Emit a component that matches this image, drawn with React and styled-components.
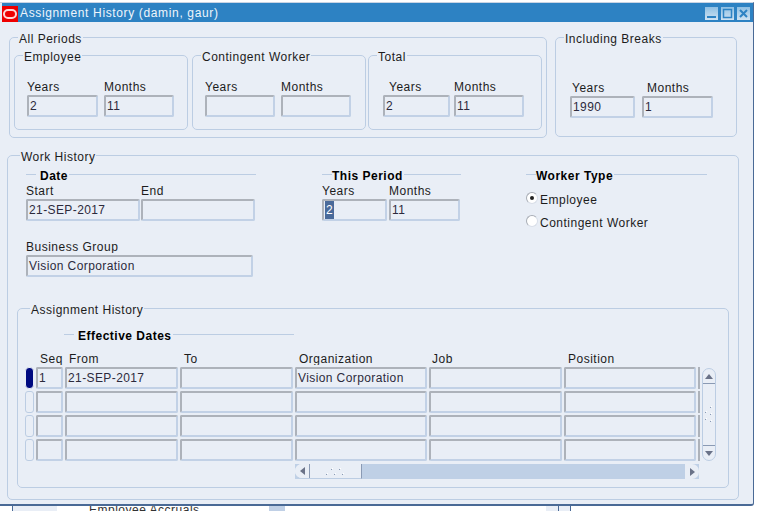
import React from 'react';
import styled, { createGlobalStyle } from 'styled-components';

const GlobalStyle = createGlobalStyle`
    html, body {
        margin: 0;
        padding: 0;
        background: #ffffff;
    }
    body {
        font-family: "Liberation Sans", Arial, sans-serif;
        font-size: 12px;
        color: #1c1c1c;
    }
`;

const Page = styled.div`
    width: 757px;
    height: 511px;
    overflow: hidden;
    padding-top: 2px;
    box-sizing: border-box;
`;

const Window = styled.div`
    width: 754px;
    height: 504px;
    box-sizing: border-box;
    background: #e9eef6;
    border-top: 1px solid #c9d4e4;
    border-right: 1px solid #4a6a96;
    border-bottom: 2px solid #4a6a96;
    border-bottom-right-radius: 3px;
`;

const TitleBar = styled.div`
    height: 19px;
    margin: 0 0 0 2px;
    background: #2d82c3;
    display: flex;
    align-items: center;
    color: #eef5fb;
    font-size: 12px;
    letter-spacing: 0.64px;
`;

const OracleLogo = styled.div`
    width: 16px;
    height: 16px;
    margin: 2px 2px 0 0;
    background: #ee0000;
    display: flex;
    align-items: center;
    justify-content: center;
    flex: none;
`;

const TitleText = styled.span`
    flex: 1;
`;

const WinButton = styled.div`
    width: 13px;
    height: 13px;
    margin-right: 3px;
    margin-top: 1px;
    background: linear-gradient(#8fc0e4, #cfe2f2);
    display: flex;
    align-items: center;
    justify-content: center;
    flex: none;
`;

const Body = styled.div`
    padding: 8px 0 0 7px;
`;

const TopRow = styled.div`
    display: flex;
    gap: 8px;
    margin-left: 2px;
`;

const Group = styled.fieldset`
    margin: ${(p) => p.$margin || 0};
    padding: ${(p) => p.$padding || 0};
    width: ${(p) => p.$width}px;
    height: ${(p) => p.$height}px;
    box-sizing: border-box;
    border: 1px solid #bccde3;
    border-radius: 5px;
    min-width: 0;
    flex: none;
`;

const GroupTitle = styled.legend`
    margin-left: ${(p) => p.$offset || 8}px;
    padding: 0 1px;
    height: 14px;
    font-size: 12px;
    line-height: 18px;
    letter-spacing: 0.5px;
`;

const GroupRow = styled.div`
    display: flex;
    gap: 4px;
    padding-left: 4px;
`;

const FieldRow = styled.div`
    display: flex;
    gap: ${(p) => p.$gap || 6}px;
    padding-left: ${(p) => p.$indent || 0}px;
`;

const FieldBox = styled.div`
    display: flex;
    flex-direction: column;
    gap: 2px;
`;

const Label = styled.label`
    display: block;
    height: 14px;
    line-height: 16px;
    padding-left: ${(p) => p.$indent || 0}px;
    letter-spacing: 0.5px;
    white-space: nowrap;
    overflow: hidden;
`;

const Input = styled.div`
    width: ${(p) => p.$width}px;
    height: 22px;
    box-sizing: border-box;
    border: 2px solid #c2d1e6;
    border-top-color: #adb2ba;
    border-left-color: #adb2ba;
    border-radius: 2px;
    padding-left: 1px;
    line-height: 18px;
    font-size: 12px;
    letter-spacing: 0.4px;
    color: #2c2a3c;
    white-space: nowrap;
    overflow: hidden;
`;

const Selected = styled.span`
    display: inline-block;
    background: #4a6a9a;
    color: #ffffff;
    padding: 0 1px;
`;

const FormGrid = styled.div`
    display: grid;
    grid-template-columns: 296px 204px 181px;
    padding: 7px 0 0 18px;
`;

const Column = styled.div`
    display: flex;
    flex-direction: column;
`;

const Section = styled.div`
    display: flex;
    align-items: center;
    width: ${(p) => p.$width}px;
    height: 14px;
    font-weight: bold;
    letter-spacing: 0.5px;
    color: #000000;

    &::before {
        content: "";
        width: 10px;
        height: 1px;
        margin-top: -4px;
        background: #bccde3;
    }

    &::after {
        content: "";
        flex: 1;
        height: 1px;
        margin-top: -4px;
        background: #bccde3;
    }
`;

const SectionText = styled.span`
    padding: 0 1px 0 ${(p) => p.$left ?? 4}px;
`;

const BusinessGroup = styled(FieldBox)`
    margin-top: 18px;
`;

const RadioList = styled.div`
    margin-top: 5px;
`;

const RadioRow = styled.div`
    display: flex;
    align-items: center;
    height: 23px;
    letter-spacing: 0.5px;
`;

const Radio = styled.span`
    width: 10px;
    height: 10px;
    margin: -4px 2px 0 0;
    border-radius: 50%;
    background: #ffffff;
    border: 1px solid #a8adb5;
    border-bottom-color: #d8dee8;
    border-right-color: #d8dee8;
    display: flex;
    align-items: center;
    justify-content: center;

    &::after {
        content: "";
        width: 4px;
        height: 4px;
        border-radius: 50%;
        background: ${(p) => (p.$on ? '#222222' : 'transparent')};
    }
`;

const Effective = styled.div`
    margin: 0 0 8px 46px;
`;

const TableArea = styled.div`
    display: flex;
    align-items: flex-end;
    padding-left: 7px;
`;

const TableGrid = styled.div`
    display: grid;
    grid-template-columns: 9px 27px 113px 113px 132px 133px 132px 2px;
    gap: 2px;
`;

const Indicator = styled.div`
    height: 22px;
    box-sizing: border-box;
    border: 1px solid ${(p) => (p.$current ? '#e9eef6' : '#bccde3')};
    border-radius: ${(p) => (p.$current ? 4 : 3)}px;
    background: ${(p) => (p.$current ? '#000a80' : 'transparent')};
`;

const HeadCell = styled(Label)`
    padding-left: ${(p) => p.$indent || 4}px;
`;

const Cell = styled(Input)`
    width: auto;
`;

const ClipCell = styled.div`
    height: 22px;
    box-sizing: border-box;
    border-left: 2px solid #adb2ba;
`;

const VScroll = styled.div`
    width: 14px;
    height: 93px;
    margin-left: 2px;
    box-sizing: border-box;
    border: 1px solid #bccde3;
    border-radius: 7px;
    display: flex;
    flex-direction: column;
    align-items: center;
    justify-content: space-between;
    flex: none;
`;

const VArrow = styled.div`
    width: 100%;
    height: 14px;
    display: flex;
    align-items: center;
    justify-content: center;
    border-${(p) => (p.$up ? 'bottom' : 'top')}: 1px solid #8a9ab4;
`;

const HScroll = styled.div`
    width: 404px;
    height: 15px;
    margin: 3px 0 0 277px;
    background: #bfd0e6;
    display: flex;
    justify-content: space-between;
`;

const HThumb = styled.div`
    width: 67px;
    box-sizing: border-box;
    display: flex;
    align-items: center;
    background: #e9eef6;
    border-right: 1px solid #8a9ab4;
    border-bottom: 1px solid #bccde3;
    border-radius: 7px 0 0 7px;
`;

const HArrow = styled.div`
    width: 14px;
    height: 100%;
    flex: none;
    display: flex;
    align-items: center;
    justify-content: center;
    background: #e9eef6;
    border-right: ${(p) => (p.$left ? '1px solid #8a9ab4' : '0')};
    border-radius: ${(p) => (p.$left ? '7px 0 0 7px' : '0 7px 7px 0')};
`;

const GripWrap = styled.div`
    flex: 1;
    display: flex;
    justify-content: center;
`;

const BackStrip = styled.div`
    display: flex;
    height: 5px;
`;

const BackPiece = styled.div`
    width: ${(p) => p.$width}px;
    box-sizing: border-box;
    flex: none;
    background: ${(p) => p.$bg || '#ffffff'};
    border-left: ${(p) => (p.$line ? '1px solid #4a6a96' : '0')};
    font-size: 12px;
    letter-spacing: 0.5px;
    line-height: 14px;
    padding-left: ${(p) => p.$indent || 0}px;
    overflow: hidden;
    white-space: nowrap;
    color: #333333;
`;

const BackText = styled.span`
    display: block;
    margin-top: -3px;
`;

const Triangle = ({ dir }) => {
    const points = {
        up: '1,6 9,6 5,1',
        down: '1,1 9,1 5,6',
        left: '6,1 6,9 1,5',
        right: '1,1 1,9 6,5',
    };
    const vertical = dir === 'up' || dir === 'down';
    return (
        <svg width={vertical ? 10 : 7} height={vertical ? 7 : 10}>
            <polygon points={points[dir]} fill="#6a7288" />
        </svg>
    );
};

const Grip = ({ vertical }) => (
    <svg width={vertical ? 10 : 20} height={vertical ? 20 : 10}>
        {(vertical
            ? [[7, 1], [2, 6], [7, 8], [2, 13], [7, 15]]
            : [[1, 7], [6, 2], [9, 7], [14, 2], [17, 7]]
        ).map(([x, y]) => (
            <g key={`${x}-${y}`}>
                <rect x={x} y={y} width="1" height="1" fill="#ffffff" />
                <rect x={x - 1} y={y + 1} width="1" height="1" fill="#8a9ab4" />
            </g>
        ))}
    </svg>
);

const Field = ({ label, width, value, indent }) => (
    <FieldBox>
        <Label $indent={indent}>{label}</Label>
        <Input $width={width}>{value}</Input>
    </FieldBox>
);

const emptyRows = [1, 2, 3];
const columns = ['Seq', 'From', 'To', 'Organization', 'Job', 'Position'];

const App = () => {
    return (
        <Page>
            <GlobalStyle />
            <Window>
                <TitleBar>
                    <OracleLogo>
                        <svg width="14" height="10" viewBox="0 0 14 10">
                            <rect x="1" y="1" width="12" height="8" rx="4" fill="none" stroke="#ffd8d8" strokeWidth="2" />
                        </svg>
                    </OracleLogo>
                    <TitleText>Assignment History (damin, gaur)</TitleText>
                    <WinButton>
                        <svg width="11" height="11"><rect x="1" y="8" width="9" height="2" fill="#2d82c3" /></svg>
                    </WinButton>
                    <WinButton>
                        <svg width="11" height="11"><rect x="1.5" y="1.5" width="8" height="8" fill="none" stroke="#2d82c3" strokeWidth="1.5" /></svg>
                    </WinButton>
                    <WinButton>
                        <svg width="11" height="11"><path d="M2 2 L9 9 M9 2 L2 9" stroke="#2d82c3" strokeWidth="2" /></svg>
                    </WinButton>
                </TitleBar>
                <Body>
                    <TopRow>
                        <Group $width={538} $height={108} $padding="4px 0 0 0">
                            <GroupTitle>All Periods</GroupTitle>
                            <GroupRow>
                                <Group $width={174} $height={82} $padding="17px 0 0 0">
                                    <GroupTitle>Employee</GroupTitle>
                                    <FieldRow $indent={12}>
                                        <Field label="Years" width={71} value="2" />
                                        <Field label="Months" width={70} value="11" />
                                    </FieldRow>
                                </Group>
                                <Group $width={174} $height={82} $padding="17px 0 0 0">
                                    <GroupTitle>Contingent Worker</GroupTitle>
                                    <FieldRow $indent={12}>
                                        <Field label="Years" width={70} />
                                        <Field label="Months" width={70} />
                                    </FieldRow>
                                </Group>
                                <Group $width={174} $height={82} $padding="17px 0 0 0" $margin="0 0 0 -2px">
                                    <GroupTitle>Total</GroupTitle>
                                    <FieldRow $indent={14} $gap={4}>
                                        <Field label="Years" width={67} value="2" indent={6} />
                                        <Field label="Months" width={70} value="11" />
                                    </FieldRow>
                                </Group>
                            </GroupRow>
                        </Group>
                        <Group $width={182} $height={107} $padding="36px 0 0 0">
                            <GroupTitle>Including Breaks</GroupTitle>
                            <FieldRow $indent={14} $gap={7}>
                                <Field label="Years" width={65} value="1990" indent={2} />
                                <Field label="Months" width={71} value="1" indent={5} />
                            </FieldRow>
                        </Group>
                    </TopRow>
                    <Group $width={732} $height={352} $margin="10px 0 0 0">
                        <GroupTitle $offset={12}>Work History</GroupTitle>
                        <FormGrid>
                            <Column>
                                <Section $width={230}>
                                    <SectionText>Date</SectionText>
                                </Section>
                                <FieldRow $gap={1}>
                                    <Field label="Start" width={114} value="21-SEP-2017" />
                                    <Field label="End" width={114} />
                                </FieldRow>
                                <BusinessGroup>
                                    <Label>Business Group</Label>
                                    <Input $width={227}>Vision Corporation</Input>
                                </BusinessGroup>
                            </Column>
                            <Column>
                                <Section $width={139}>
                                    <SectionText $left={0}>This Period</SectionText>
                                </Section>
                                <FieldRow $gap={2}>
                                    <Field label="Years" width={65} value={<Selected>2</Selected>} />
                                    <Field label="Months" width={71} value="11" />
                                </FieldRow>
                            </Column>
                            <Column>
                                <Section $width={181}>
                                    <SectionText $left={0}>Worker Type</SectionText>
                                </Section>
                                <RadioList>
                                    <RadioRow>
                                        <Radio $on />
                                        Employee
                                    </RadioRow>
                                    <RadioRow>
                                        <Radio />
                                        Contingent Worker
                                    </RadioRow>
                                </RadioList>
                            </Column>
                        </FormGrid>
                        <Group $width={712} $height={187} $margin="24px 0 0 9px" $padding="14px 0 0 0">
                            <GroupTitle $offset={12}>Assignment History</GroupTitle>
                            <Effective>
                                <Section $width={230}>
                                    <SectionText>Effective Dates</SectionText>
                                </Section>
                            </Effective>
                            <TableArea>
                                <TableGrid>
                                    <div />
                                    {columns.map((name) => (
                                        <HeadCell key={name} $indent={name === 'Job' ? 3 : 4}>{name}</HeadCell>
                                    ))}
                                    <div />
                                    <Indicator $current />
                                    <Cell>1</Cell>
                                    <Cell>21-SEP-2017</Cell>
                                    <Cell />
                                    <Cell>Vision Corporation</Cell>
                                    <Cell />
                                    <Cell />
                                    <ClipCell />
                                    {emptyRows.map((row) => (
                                        <React.Fragment key={row}>
                                            <Indicator />
                                            <Cell />
                                            <Cell />
                                            <Cell />
                                            <Cell />
                                            <Cell />
                                            <Cell />
                                            <ClipCell />
                                        </React.Fragment>
                                    ))}
                                </TableGrid>
                                <VScroll>
                                    <VArrow $up><Triangle dir="up" /></VArrow>
                                    <Grip vertical />
                                    <VArrow><Triangle dir="down" /></VArrow>
                                </VScroll>
                            </TableArea>
                            <HScroll>
                                <HThumb>
                                    <HArrow $left><Triangle dir="left" /></HArrow>
                                    <GripWrap><Grip /></GripWrap>
                                </HThumb>
                                <HArrow><Triangle dir="right" /></HArrow>
                            </HScroll>
                        </Group>
                    </Group>
                </Body>
            </Window>
            <BackStrip>
                <BackPiece $width={12} />
                <BackPiece $width={45} $bg="#e9eef6" $line />
                <BackPiece $width={212} $indent={32}><BackText>Employee Accruals</BackText></BackPiece>
                <BackPiece $width={16} $bg="#c0d0e6" />
                <BackPiece $width={261} />
                <BackPiece $width={12} $bg="#e9eef6" />
                <BackPiece $width={12} $bg="#e9eef6" $line />
                <BackPiece $width={187} $line />
            </BackStrip>
        </Page>
    );
};

export default App;
